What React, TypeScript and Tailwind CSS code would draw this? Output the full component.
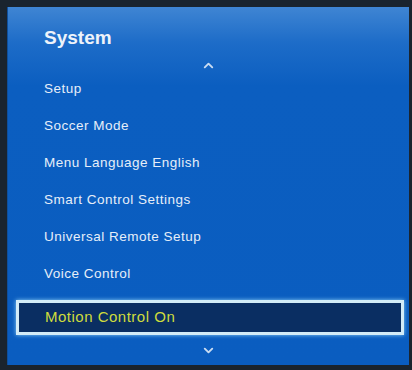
import { ChevronUp, ChevronDown } from 'lucide-react';

const ITEMS = [
  'Setup',
  'Soccer Mode',
  'Menu Language English',
  'Smart Control Settings',
  'Universal Remote Setup',
  'Voice Control',
];

export default function App() {
  return (
    <div
      className="w-[412px] h-[370px] bg-[#1a242e] pl-[7px] pt-[7px] pr-[3px] pb-[5px]"
      style={{ fontFamily: '"Liberation Sans", Arial, sans-serif' }}
    >
      <div className="h-full flex flex-col bg-[linear-gradient(to_bottom,#3f85d3_0%,#1d6cc8_10%,#0b5ec0_22%,#0a5dc0_100%)] border-l border-[#0e4f9c]">
        <div className="h-[48px] pt-[20px] pl-[36px]">
          <h1 className="text-[19px] leading-[22px] font-bold text-[#eef3fa]">System</h1>
        </div>
        <div className="h-[16px] flex items-center justify-center">
          <ChevronUp size={15} strokeWidth={3} className="text-[#c9dcf2] mt-[4px]" />
        </div>
        {ITEMS.map((label) => (
          <div key={label} className="h-[37px] flex items-center pl-[36px]">
            <span className="text-[13.5px] text-[#e6eef9] tracking-[0.5px]">{label}</span>
          </div>
        ))}
        <div className="mt-[7px] ml-[8px] mr-[5px] h-[35px] flex items-center pl-[26px] bg-[#0a2e62] border-[3px] border-[#d3ecf7] shadow-[0_0_4px_#8fd0f5]">
          <span className="text-[15px] text-[#cfdc3c] tracking-[0.5px]">Motion Control On</span>
        </div>
        <div className="flex-1 flex items-center justify-center">
          <ChevronDown size={15} strokeWidth={3} className="text-[#c9dcf2]" />
        </div>
      </div>
    </div>
  );
}
